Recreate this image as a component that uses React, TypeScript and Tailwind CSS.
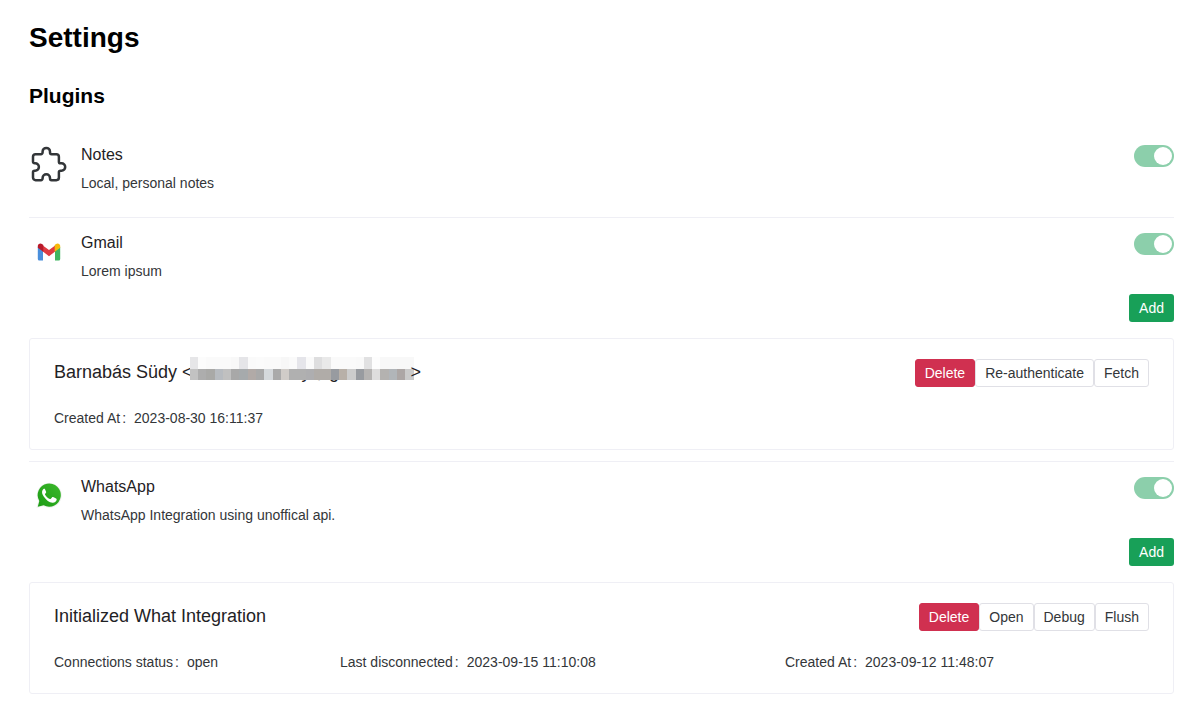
import { useState } from "react";
import type { ReactNode } from "react";

function PuzzleIcon() {
  return (
    <svg
      viewBox="0 0 40 40"
      className="size-10"
      fill="none"
      stroke="currentColor"
      strokeWidth="2.5"
      strokeLinejoin="round"
      aria-hidden="true"
    >
      <path d="M6.600 10.200H12a1.600 1.600 0 0 0 1.600-1.600V7.600a3.700 3.700 0 0 1 7.400 0v1a1.600 1.600 0 0 0 1.600 1.600h4.700a2.600 2.600 0 0 1 2.600 2.600v4.900a1.600 1.600 0 0 0 1.600 1.600h1a3.700 3.700 0 0 1 0 7.400h-1a1.600 1.600 0 0 0-1.600 1.600v5.300a2.600 2.600 0 0 1-2.600 2.600h-4.700a1.600 1.600 0 0 1-1.600-1.600V34a3.700 3.700 0 0 0-7.400 0v.6a1.600 1.600 0 0 1-1.600 1.600H6.600A2.600 2.600 0 0 1 4 33.600v-5.300a1.600 1.600 0 0 1 1.600-1.600h.6a3.700 3.700 0 0 0 0-7.400h-.6A1.600 1.600 0 0 1 4 17.700v-4.900a2.600 2.600 0 0 1 2.600-2.600z" />
    </svg>
  );
}

function GmailLogo() {
  return (
    <svg viewBox="0 0 40 40" className="size-10" aria-hidden="true">
      <path d="M8.800 15l5.200 3.800V28.500h-3.700a1.500 1.500 0 0 1-1.500-1.500z" fill="#4a8fdc" />
      <path d="M31.200 15l-5.200 3.800V28.500h3.700a1.500 1.500 0 0 0 1.500-1.500z" fill="#3fb560" />
      <path d="M13.500 13.300l6.500 4.800 6.500-4.800v6l-6.500 4.900-6.500-4.900z" fill="#de3b42" />
      <path d="M8.800 14c0-2.200 2.500-3.200 4.200-2l1.300 1v6.800l-5.500-4z" fill="#b8192a" />
      <path d="M31.200 14c0-2.200-2.500-3.200-4.200-2l-1.300 1v6.800l5.500-4z" fill="#f6b90a" />
    </svg>
  );
}

function WhatsAppLogo() {
  return (
    <svg viewBox="0 0 40 40" className="size-10" aria-hidden="true">
      <defs>
        <linearGradient id="whatsapp-green" x1="0" y1="1" x2="1" y2="0">
          <stop offset="0" stopColor="#1c9c14" />
          <stop offset="1" stopColor="#3cb82c" />
        </linearGradient>
      </defs>
      <path d="M7.500 32l1.800-6.700a12.500 12.500 0 1 1 5 5z" fill="#eef1ee" />
      <path d="M8.800 30.800l1.500-5.700a11.600 11.600 0 1 1 4.400 4.200z" fill="url(#whatsapp-green)" />
      <path
        d="M15.700 12.500c-.6 0-1.200.2-1.700.9-1.700 1.900-1 4.700.9 7.300 2.300 3.300 5.300 5.700 8.600 6 2.300.1 4-1.100 4.200-3.100 0-.6-.1-.8-.6-1.100l-3-1.400c-.5-.2-.8-.1-1.100.3l-1.200 1.400c-.2.300-.6.300-1 .1-2.100-.9-3.600-2.300-4.700-4.200-.2-.4-.1-.7.1-1l.8-1c.2-.3.200-.7.1-1l-1.200-2.800c-.1-.3-.4-.4-.7-.4z"
        fill="#fff"
      />
    </svg>
  );
}

function Toggle({ label }: { label: string }) {
  const [on, setOn] = useState(true);
  return (
    <label className="relative mt-[3px] flex h-[22px] w-10 shrink-0 rounded-full bg-[#dbdbdb] p-0.5 has-checked:justify-end has-checked:bg-[#8ccfab]">
      <input
        type="checkbox"
        role="switch"
        aria-label={label}
        checked={on}
        onChange={() => setOn(!on)}
        className="absolute inset-0 size-full cursor-pointer opacity-0"
      />
      <span className="size-[18px] rounded-full bg-white" />
    </label>
  );
}

function ActionButton({ children, danger }: { children: ReactNode; danger?: boolean }) {
  const tone = danger
    ? "border-[#d03050] bg-[#d03050] text-white"
    : "border-[#e0e0e6] bg-white text-[#333639]";
  return (
    <button type="button" className={`h-7 rounded-[3px] border px-[9px] text-sm ${tone}`}>
      {children}
    </button>
  );
}

function Plugin({
  icon,
  name,
  description,
  last,
  children,
}: {
  icon: ReactNode;
  name: string;
  description: string;
  last?: boolean;
  children?: ReactNode;
}) {
  return (
    <li className={last ? "py-3" : "border-b border-[#efeff5] pt-3 pb-[11px]"}>
      <div className="flex gap-3">
        <div className="mt-0.5 size-10 shrink-0">{icon}</div>
        <div className="min-w-0 grow">
          <h3 className="text-base/[26px] text-[#1f2225]">{name}</h3>
          <p className="mt-1 text-sm/[22px]">{description}</p>
        </div>
        <Toggle label={name} />
      </div>
      <div className="mt-3">{children}</div>
    </li>
  );
}

function AddButton() {
  return (
    <div className="mb-4 flex justify-end">
      <button type="button" className="h-7 rounded-[3px] bg-[#18a058] px-2.5 text-sm text-white">
        Add
      </button>
    </div>
  );
}

function Account({ title, actions, children }: { title: ReactNode; actions: ReactNode; children: ReactNode }) {
  return (
    <section className="rounded-[3px] border border-[#efeff5] px-6 pt-5 pb-5">
      <div className="flex items-start justify-between">
        <h4 className="text-lg/[26px] text-[#1f2225]">{title}</h4>
        <div className="flex">{actions}</div>
      </div>
      {children}
    </section>
  );
}

function Detail({ label, value }: { label: string; value: string }) {
  return (
    <div className="flex text-sm/[22px]">
      <dt>
        {label}
        <span className="mr-2 ml-0.5">:</span>
      </dt>
      <dd>{value}</dd>
    </div>
  );
}

const mosaic: [string, string][] = [
  ["#e6e6e8", "#c2c2c2"], ["#fcfcfc", "#adadad"], ["#fafafa", "#a9a9a7"], ["#fafafa", "#b7bbc0"],
  ["#fafafa", "#c0c0c0"], ["#f8f8f8", "#a8a8a8"], ["#e5e5e8", "#a6aaac"], ["#fafafa", "#b1aaa7"],
  ["#fbfbfb", "#a9a9a9"], ["#fafafa", "#d5d9dc"], ["#fafafa", "#aaaaaa"], ["#f7f7f7", "#d0ccc8"],
  ["#fafafa", "#b0b0b0"], ["#e5e5ea", "#b0b0b0"], ["#fafafa", "#aeaeb0"], ["#dededf", "#b0aca8"],
  ["#e9e9e9", "#b0aca8"], ["#fafafa", "#989ba0"], ["#fafafa", "#b8b0a8"], ["#fafafa", "#cccccc"],
  ["#f9f9f9", "#989ba0"], ["#e1e1e2", "#b5b3b2"], ["#fdfdfd", "#dedddd"], ["#f8f8f8", "#b4b2b0"],
  ["#f8f8f8", "#b1b5b9"], ["#f8f8f8", "#aca6a5"], ["#f8f8f8", "#cacaca"],
];

function HiddenAddress() {
  return (
    <span className="relative inline-flex w-[218px] align-top" aria-hidden="true">
      <span className="ml-[109px]">y@g</span>
      <span className="absolute -inset-x-[3px] -top-0.5 flex h-[23px]">
        {mosaic.map(([top, bottom], i) => (
          <span key={i} className="flex grow flex-col">
            <span className="h-3" style={{ backgroundColor: top }} />
            <span className="h-[11px]" style={{ backgroundColor: bottom }} />
          </span>
        ))}
      </span>
    </span>
  );
}

export default function App() {
  return (
    <main className="bg-white pt-4 pr-[22px] pb-2 pl-[29px] font-['Liberation_Sans',Arial,sans-serif] text-[#333639]">
      <h1 className="text-[28px]/[44px] font-bold text-black">Settings</h1>
      <h2 className="mt-5 text-[21px]/8 font-bold text-black">Plugins</h2>
      <ul className="mt-[18px]">
        <Plugin icon={<PuzzleIcon />} name="Notes" description="Local, personal notes" />
        <Plugin icon={<GmailLogo />} name="Gmail" description="Lorem ipsum">
          <AddButton />
          <Account
            title={
              <>
                Barnabás Südy &lt;
                <HiddenAddress />
                <span className="relative">&gt;</span>
              </>
            }
            actions={
              <>
                <ActionButton danger>Delete</ActionButton>
                <ActionButton>Re-authenticate</ActionButton>
                <ActionButton>Fetch</ActionButton>
              </>
            }
          >
            <dl className="mt-5">
              <Detail label="Created At" value="2023-08-30 16:11:37" />
            </dl>
          </Account>
        </Plugin>
        <Plugin icon={<WhatsAppLogo />} name="WhatsApp" description="WhatsApp Integration using unoffical api." last>
          <AddButton />
          <Account
            title="Initialized What Integration"
            actions={
              <>
                <ActionButton danger>Delete</ActionButton>
                <ActionButton>Open</ActionButton>
                <ActionButton>Debug</ActionButton>
                <ActionButton>Flush</ActionButton>
              </>
            }
          >
            <dl className="mt-5 grid grid-cols-[286fr_445fr_364fr]">
              <Detail label="Connections status" value="open" />
              <Detail label="Last disconnected" value="2023-09-15 11:10:08" />
              <Detail label="Created At" value="2023-09-12 11:48:07" />
            </dl>
          </Account>
        </Plugin>
      </ul>
    </main>
  );
}
